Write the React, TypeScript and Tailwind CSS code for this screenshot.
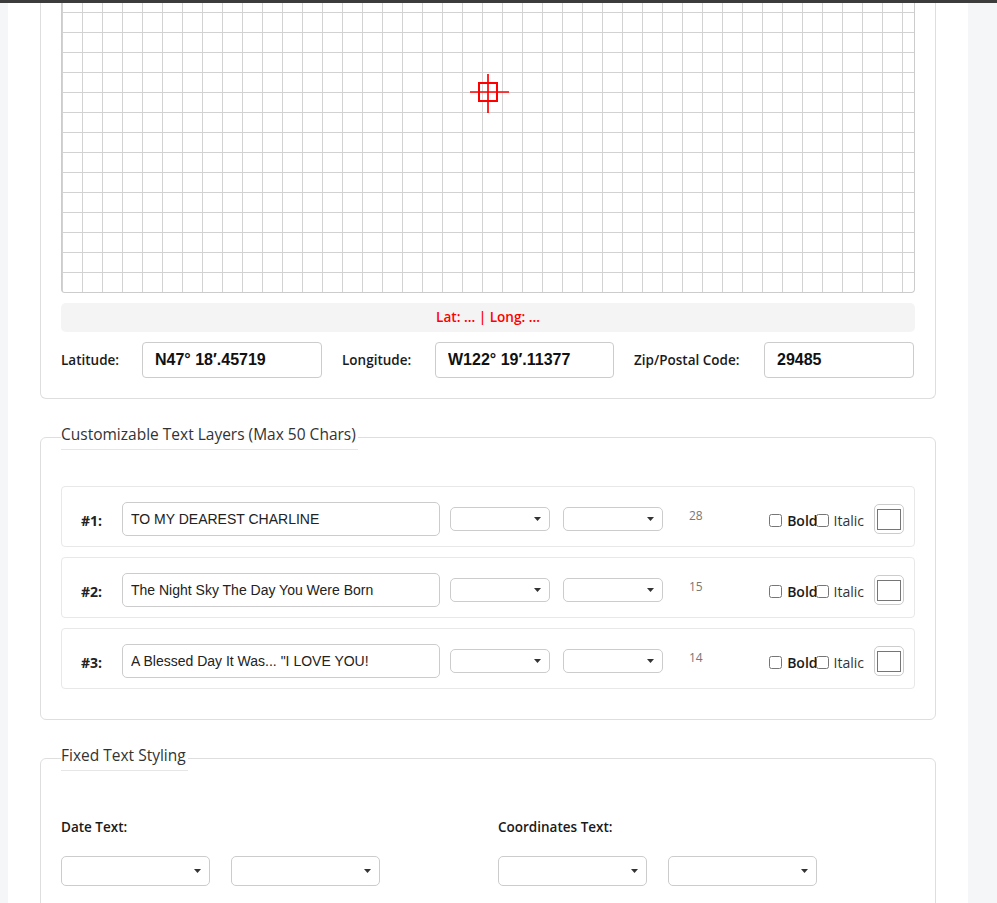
import React from "react";

function Select({ w, h }: { w: string; h: string }) {
  return (
    <div className={`${w} ${h} flex shrink-0 items-center justify-end rounded-[5px] border border-[#cccccc] bg-white pr-[8px]`}>
      <svg width="7" height="4" viewBox="0 0 7 4">
        <path d="M0 0h7L3.5 4z" fill="#333" />
      </svg>
    </div>
  );
}

function Row({ n, text, count }: { n: number; text: string; count: number }) {
  return (
    <div className="flex h-[61px] items-center rounded-[4px] border border-[#e8e8e8] pl-[19px] pr-[10px] pt-[5px]">
      <div className="w-[41px] pt-[3px] text-[14px] font-bold text-[#222]">#{n}:</div>
      <input
        readOnly
        value={text}
        className="h-[34px] w-[318px] rounded-[5px] border border-[#cccccc] px-[8px] font-['Liberation_Sans',Arial,sans-serif] text-[14px] text-[#222] outline-none"
      />
      <div className="ml-[10px]">
        <Select w="w-[100px]" h="h-[24px]" />
      </div>
      <div className="ml-[13px]">
        <Select w="w-[100px]" h="h-[24px]" />
      </div>
      <div className="ml-[26px] -mt-[6px] text-[12px] text-[#777]">{count}</div>
      <div className="ml-auto flex items-center pt-[2px] text-[14px] text-[#333]">
        <label className="flex items-center">
          <input type="checkbox" className="h-[13px] w-[13px]" />
          <span className="-mr-[2px] ml-[5px] font-semibold text-[#1a1a1a]">Bold</span>
        </label>
        <label className="flex items-center">
          <input type="checkbox" className="h-[13px] w-[13px]" />
          <span className="ml-[5px]">Italic</span>
        </label>
        <div className="-mt-[2px] ml-[10px] flex h-[30px] w-[30px] items-center justify-center rounded-[5px] border border-[#cccccc]">
          <div className="h-[21px] w-[24px] border border-[#767676] bg-white" />
        </div>
      </div>
    </div>
  );
}

export default function App() {
  return (
    <div className="min-h-screen bg-[#f5f6f8] font-['Open_Sans',sans-serif] text-[#222]">
      <div className="h-[3px] bg-[#3c3c3c]" />
      <div className="ml-[8px] w-[960px] bg-white px-[32px] pb-[60px]">
        {/* Map card */}
        <div className="rounded-b-[6px] border-x border-b border-[#dedede] px-[20px] pb-[20px]">
          <div className="relative h-[290px] rounded-b-[4px] border-x border-b border-[#cccccc] bg-[linear-gradient(to_right,#d2d2d2_1px,transparent_1px),linear-gradient(to_bottom,#d2d2d2_1px,transparent_1px)] bg-size-[20px_20px] bg-position-[0_9px]">
            <svg
              className="absolute left-[406px] top-[69px]"
              width="42"
              height="42"
              viewBox="0 0 42 42"
            >
              <line x1="20" y1="2" x2="20" y2="41" stroke="#ff0000" strokeWidth="1.7" />
              <line x1="2" y1="20" x2="41" y2="20" stroke="#ff0000" strokeWidth="1.7" />
              <rect x="11" y="11" width="18" height="18" fill="none" stroke="#ff0000" strokeWidth="2" />
            </svg>
          </div>
          <div className="mt-[10px] flex h-[29px] items-center justify-center rounded-[5px] bg-[#f4f4f4] text-[13.6px] font-semibold text-[#ff0000]">
            Lat: ... | Long: ...
          </div>
          <div className="mt-[10px] flex items-center gap-[20px] text-[13.5px] font-semibold text-[#1a1a1a]">
            <div className="flex items-center">
              <div className="w-[81px]">Latitude:</div>
              <input
                readOnly
                value="N47° 18′.45719"
                className="h-[36px] w-[180px] rounded-[4px] border border-[#cccccc] px-[12px] font-['Liberation_Sans',Arial,sans-serif] text-[16px] font-bold text-[#111] outline-none"
              />
            </div>
            <div className="flex items-center">
              <div className="w-[93px]">Longitude:</div>
              <input
                readOnly
                value="W122° 19′.11377"
                className="h-[36px] w-[179px] rounded-[4px] border border-[#cccccc] px-[12px] font-['Liberation_Sans',Arial,sans-serif] text-[16px] font-bold text-[#111] outline-none"
              />
            </div>
            <div className="flex items-center">
              <div className="w-[130px]">Zip/Postal Code:</div>
              <input
                readOnly
                value="29485"
                className="h-[36px] w-[150px] rounded-[4px] border border-[#cccccc] px-[12px] font-['Liberation_Sans',Arial,sans-serif] text-[16px] font-bold text-[#111] outline-none"
              />
            </div>
          </div>
        </div>

        {/* Customizable text layers */}
        <fieldset className="mt-[25px] rounded-[6px] border border-[#dedede] px-[20px] pb-[30px] pt-[36px]">
          <legend className="border-b border-[#e6e6e6] pb-[4px] pr-[2px] text-[15.5px] leading-[21px] text-[#333]">
            Customizable Text Layers (Max 50 Chars)
          </legend>
          <div className="flex flex-col gap-[10px]">
            <Row n={1} text="TO MY DEAREST CHARLINE" count={28} />
            <Row n={2} text="The Night Sky The Day You Were Born" count={15} />
            <Row n={3} text={'A Blessed Day It Was... "I LOVE YOU!'} count={14} />
          </div>
        </fieldset>

        {/* Fixed text styling */}
        <fieldset className="mt-[25px] rounded-[6px] border border-[#dedede] px-[20px] pb-[30px] pt-[46px]">
          <legend className="border-b border-[#e6e6e6] pb-[4px] pr-[2px] text-[15.5px] leading-[21px] text-[#333]">
            Fixed Text Styling
          </legend>
          <div className="grid grid-cols-2 gap-x-[20px]">
            <div>
              <div className="text-[13.5px] font-semibold leading-[20px] text-[#1a1a1a]">Date Text:</div>
              <div className="mt-[19px] flex gap-[21px]">
                <Select w="w-[149px]" h="h-[30px]" />
                <Select w="w-[149px]" h="h-[30px]" />
              </div>
            </div>
            <div>
              <div className="text-[13.5px] font-semibold leading-[20px] text-[#1a1a1a]">Coordinates Text:</div>
              <div className="mt-[19px] flex gap-[21px]">
                <Select w="w-[149px]" h="h-[30px]" />
                <Select w="w-[149px]" h="h-[30px]" />
              </div>
            </div>
          </div>
        </fieldset>
      </div>
    </div>
  );
}
